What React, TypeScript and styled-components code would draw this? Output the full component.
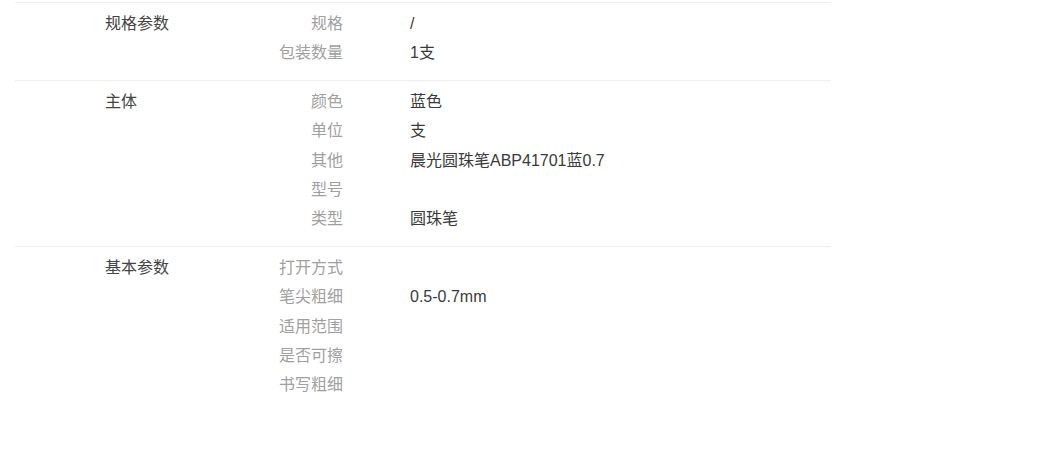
import React from "react";
import styled, { createGlobalStyle } from "styled-components";

const GlobalStyle = createGlobalStyle`
  html, body { margin: 0; padding: 0; background: #fff; }
  body {
    font-family: "Liberation Sans", "Noto Sans CJK SC", sans-serif;
    font-size: 16px;
  }
`;

const Wrapper = styled.div`
  margin: 2px 0 0 15px;
  width: 816px;
`;

const Group = styled.section`
  display: flex;
  border-top: 1px solid #eeeeee;
  padding: 6px 0 12.33px;
`;

const Title = styled.div`
  box-sizing: border-box;
  width: 240px;
  padding-left: 90px;
  line-height: 29.33px;
  color: #444;
`;

const List = styled.dl`
  margin: 0;
  flex: 1;
`;

const Row = styled.div`
  display: flex;
  height: 29.33px;
  line-height: 29.33px;
`;

const Label = styled.dt`
  width: 88px;
  text-align: right;
  color: #a0a0a0;
  white-space: nowrap;
`;

const Value = styled.dd`
  margin: 0 0 0 67px;
  color: #3a3a3a;
  white-space: nowrap;
`;

type Item = [string, string];
const groups: { title: string; items: Item[] }[] = [
  { title: "规格参数", items: [["规格", "/"], ["包装数量", "1支"]] },
  {
    title: "主体",
    items: [
      ["颜色", "蓝色"],
      ["单位", "支"],
      ["其他", "晨光圆珠笔ABP41701蓝0.7"],
      ["型号", ""],
      ["类型", "圆珠笔"],
    ],
  },
  {
    title: "基本参数",
    items: [
      ["打开方式", ""],
      ["笔尖粗细", "0.5-0.7mm"],
      ["适用范围", ""],
      ["是否可擦", ""],
      ["书写粗细", ""],
    ],
  },
];

export default function App() {
  return (
    <>
      <GlobalStyle />
      <Wrapper>
        {groups.map((g) => (
          <Group key={g.title}>
            <Title>{g.title}</Title>
            <List>
              {g.items.map(([k, v]) => (
                <Row key={k}>
                  <Label>{k}</Label>
                  <Value>{v}</Value>
                </Row>
              ))}
            </List>
          </Group>
        ))}
      </Wrapper>
    </>
  );
}
